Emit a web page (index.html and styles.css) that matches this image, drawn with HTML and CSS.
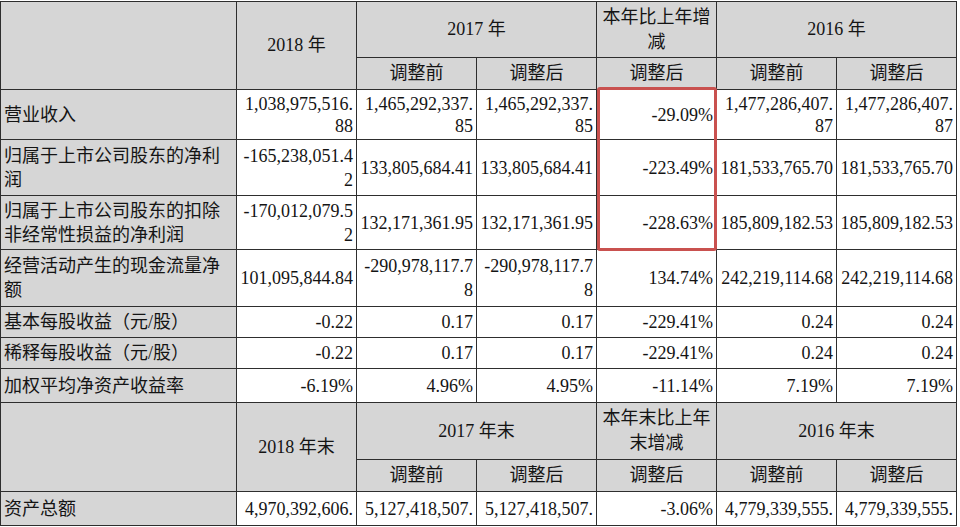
FILE: index.html
```html
<!DOCTYPE html>
<html lang="zh-CN">
<head>
<meta charset="utf-8">
<title>主要会计数据</title>
<link rel="stylesheet" href="styles.css">
</head>
<body>
<div class="sheet">
<table class="fin">
  <colgroup>
    <col class="c-label">
    <col class="c-num"><col class="c-num"><col class="c-num">
    <col class="c-num"><col class="c-num"><col class="c-num">
  </colgroup>
  <tbody>
    <tr class="h-top">
      <td class="hd" rowspan="2"></td>
      <td class="hd ctr" rowspan="2">2018 年</td>
      <td class="hd ctr" colspan="2">2017 年</td>
      <td class="hd ctr">本年比上年增减</td>
      <td class="hd ctr" colspan="2">2016 年</td>
    </tr>
    <tr class="h-sub">
      <td class="hd ctr">调整前</td>
      <td class="hd ctr">调整后</td>
      <td class="hd ctr">调整后</td>
      <td class="hd ctr">调整前</td>
      <td class="hd ctr">调整后</td>
    </tr>
    <tr class="r50">
      <td class="lbl">营业收入</td>
      <td class="num">1,038,975,516.88</td>
      <td class="num">1,465,292,337.85</td>
      <td class="num">1,465,292,337.85</td>
      <td class="num">-29.09%</td>
      <td class="num">1,477,286,407.87</td>
      <td class="num">1,477,286,407.87</td>
    </tr>
    <tr class="r56">
      <td class="lbl">归属于上市公司股东的净利润</td>
      <td class="num">-165,238,051.42</td>
      <td class="num">133,805,684.41</td>
      <td class="num">133,805,684.41</td>
      <td class="num">-223.49%</td>
      <td class="num">181,533,765.70</td>
      <td class="num">181,533,765.70</td>
    </tr>
    <tr class="r54">
      <td class="lbl">归属于上市公司股东的扣除非经常性损益的净利润</td>
      <td class="num">-170,012,079.52</td>
      <td class="num">132,171,361.95</td>
      <td class="num">132,171,361.95</td>
      <td class="num">-228.63%</td>
      <td class="num">185,809,182.53</td>
      <td class="num">185,809,182.53</td>
    </tr>
    <tr class="r57">
      <td class="lbl">经营活动产生的现金流量净额</td>
      <td class="num">101,095,844.84</td>
      <td class="num">-290,978,117.78</td>
      <td class="num">-290,978,117.78</td>
      <td class="num">134.74%</td>
      <td class="num">242,219,114.68</td>
      <td class="num">242,219,114.68</td>
    </tr>
    <tr class="r31">
      <td class="lbl">基本每股收益（元/股）</td>
      <td class="num">-0.22</td>
      <td class="num">0.17</td>
      <td class="num">0.17</td>
      <td class="num">-229.41%</td>
      <td class="num">0.24</td>
      <td class="num">0.24</td>
    </tr>
    <tr class="r31">
      <td class="lbl">稀释每股收益（元/股）</td>
      <td class="num">-0.22</td>
      <td class="num">0.17</td>
      <td class="num">0.17</td>
      <td class="num">-229.41%</td>
      <td class="num">0.24</td>
      <td class="num">0.24</td>
    </tr>
    <tr class="r34">
      <td class="lbl">加权平均净资产收益率</td>
      <td class="num">-6.19%</td>
      <td class="num">4.96%</td>
      <td class="num">4.95%</td>
      <td class="num">-11.14%</td>
      <td class="num">7.19%</td>
      <td class="num">7.19%</td>
    </tr>
    <tr class="h-top2">
      <td class="hd" rowspan="2"></td>
      <td class="hd ctr" rowspan="2">2018 年末</td>
      <td class="hd ctr" colspan="2">2017 年末</td>
      <td class="hd ctr">本年末比上年末增减</td>
      <td class="hd ctr" colspan="2">2016 年末</td>
    </tr>
    <tr class="h-sub">
      <td class="hd ctr">调整前</td>
      <td class="hd ctr">调整后</td>
      <td class="hd ctr">调整后</td>
      <td class="hd ctr">调整前</td>
      <td class="hd ctr">调整后</td>
    </tr>
    <tr class="r34">
      <td class="lbl">资产总额</td>
      <td class="num">4,970,392,606.</td>
      <td class="num">5,127,418,507.</td>
      <td class="num">5,127,418,507.</td>
      <td class="num">-3.06%</td>
      <td class="num">4,779,339,555.</td>
      <td class="num">4,779,339,555.</td>
    </tr>
  </tbody>
</table>
<div class="mark"></div>
</div>
</body>
</html>
```

FILE: styles.css
```css
html, body {
  margin: 0;
  padding: 0;
  background: #ffffff;
}

.sheet {
  position: relative;
  width: 960px;
  height: 527px;
  overflow: hidden;
  padding-top: 1px;
  box-sizing: border-box;
}

.fin {
  border-collapse: collapse;
  table-layout: fixed;
  width: 957px;
  font-family: "Liberation Serif", "Noto Sans CJK SC", serif;
  font-size: 18px;
  color: #141414;
}

.c-label { width: 236px; }
.c-num { width: 120px; }

.fin td {
  border: 1px solid #2e2e2e;
  padding: 0 3px;
  vertical-align: middle;
  line-height: 24px;
  word-break: break-all;
  overflow-wrap: anywhere;
  background: #ffffff;
}

.fin td.hd {
  background: #d6d6d6;
}

.fin td.lbl {
  background: #d6d6d6;
  text-align: left;
  padding-left: 3px;
}

.fin td.ctr {
  text-align: center;
  line-height: 25px;
}

.fin td.num {
  text-align: right;
  padding-right: 3px;
}

.h-top td { height: 55px; }
.h-top2 td { height: 56px; }
.h-sub td { height: 31px; }
.r50 td { height: 49px; line-height: 22px; }
.r56 td { height: 55px; }
.r54 td { height: 53px; }
.r57 td { height: 56px; }
.r31 td { height: 30px; }
.r34 td { height: 33px; }

.mark {
  position: absolute;
  left: 597px;
  top: 87px;
  width: 120px;
  height: 164px;
  box-sizing: border-box;
  border: 3px solid #c9514f;
  border-radius: 3px;
  pointer-events: none;
}
```
